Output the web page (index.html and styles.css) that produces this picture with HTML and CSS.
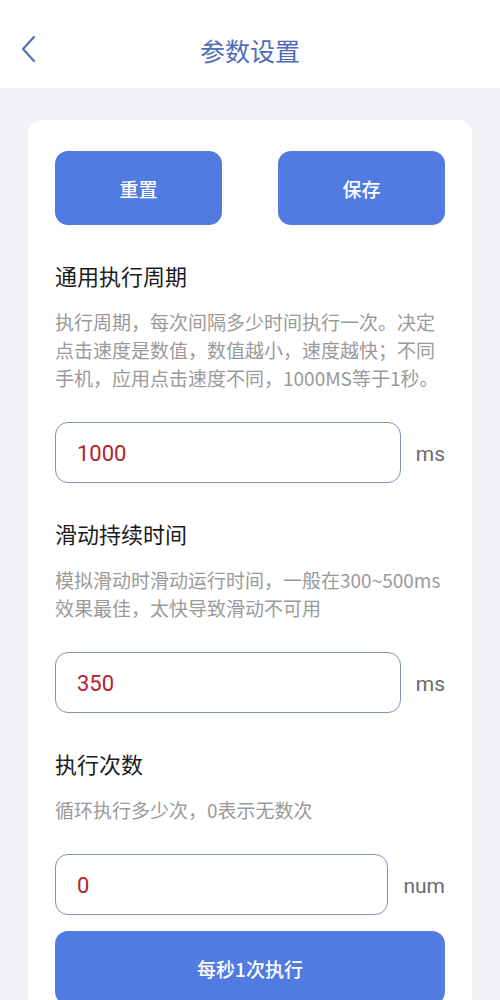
FILE: index.html
```html
<!DOCTYPE html>
<html lang="zh">
<head>
<meta charset="utf-8">
<title>参数设置</title>
<link rel="stylesheet" href="styles.css">
</head>
<body>
<div class="page">
  <header class="topbar">
    <svg class="back" width="16" height="28" viewBox="0 0 16 28"><polyline points="13,2 2,14 13,26" fill="none" stroke="#5670b8" stroke-width="2.2" stroke-linecap="round" stroke-linejoin="round"/></svg>
    <h1 class="title">参数设置</h1>
  </header>
  <main class="content">
    <section class="card">
      <div class="actions">
        <button class="btn">重置</button>
        <button class="btn">保存</button>
      </div>

      <div class="field">
        <h2 class="field-title">通用执行周期</h2>
        <p class="field-desc">执行周期，每次间隔多少时间执行一次。决定点击速度是数值，数值越小，速度越快；不同手机，应用点击速度不同，1000MS等于1秒。</p>
        <div class="input-row">
          <div class="input">1000</div>
          <span class="unit">ms</span>
        </div>
      </div>

      <div class="field">
        <h2 class="field-title">滑动持续时间</h2>
        <p class="field-desc">模拟滑动时滑动运行时间，一般在300~500ms效果最佳，太快导致滑动不可用</p>
        <div class="input-row">
          <div class="input">350</div>
          <span class="unit">ms</span>
        </div>
      </div>

      <div class="field">
        <h2 class="field-title">执行次数</h2>
        <p class="field-desc">循环执行多少次，0表示无数次</p>
        <div class="input-row">
          <div class="input">0</div>
          <span class="unit">num</span>
        </div>
      </div>

      <button class="btn btn-wide">每秒1次执行</button>
    </section>
  </main>
</div>
</body>
</html>
```

FILE: styles.css
```css
* { box-sizing: border-box; }
html, body {
  margin: 0;
  padding: 0;
  height: 100%;
  overflow: hidden;
}
body {
  font-family: "Noto Sans CJK SC", "Noto Sans", Roboto, sans-serif;
  background: #f1f2f5;
}
.page {
  width: 500px;
  min-height: 1000px;
  background: #f1f2f5;
}
.topbar {
  height: 88px;
  background: #fff;
  display: flex;
  align-items: center;
  justify-content: center;
  position: relative;
  padding-top: 12px;
}
.back {
  position: absolute;
  left: 21px;
  top: 35px;
}
.title {
  margin: 0;
  font-size: 25px;
  font-weight: 400;
  color: #4e6cba;
  line-height: 30px;
}
.content {
  padding: 32px 28px 0;
}
.card {
  background: #fff;
  border-radius: 14px 14px 0 0;
  padding: 31px 27px 40px;
  min-height: 900px;
}
.actions {
  display: flex;
  justify-content: space-between;
}
.btn {
  border: none;
  background: #527be2;
  color: #fff;
  font-family: inherit;
  font-size: 19px;
  font-weight: 500;
  width: 167px;
  height: 74px;
  border-radius: 13px;
  padding: 0;
}
.btn-wide {
  width: 100%;
  margin-top: 16px;
  display: block;
}
.field {
  padding-top: 35px;
}
.field-title {
  margin: 0;
  font-size: 22px;
  line-height: 30px;
  font-weight: 400;
  color: #1c1c1c;
}
.field-desc {
  margin: 18px 0 0;
  font-size: 19px;
  line-height: 28px;
  color: #9a9a9a;
  word-break: break-all;
}
.input-row {
  margin-top: 30px;
  display: flex;
  align-items: center;
  gap: 15px;
}
.input {
  flex: 1;
  height: 61px;
  border: 1.5px solid #8393b8;
  border-radius: 13px;
  padding-left: 21px;
  padding-top: 2px;
  display: flex;
  align-items: center;
  font-family: Roboto, "Noto Sans", sans-serif;
  font-size: 22px;
  color: #b4232b;
}
.unit {
  font-family: Roboto, "Noto Sans", sans-serif;
  font-size: 21px;
  color: #6b6b6b;
  padding-top: 3px;
}
```
